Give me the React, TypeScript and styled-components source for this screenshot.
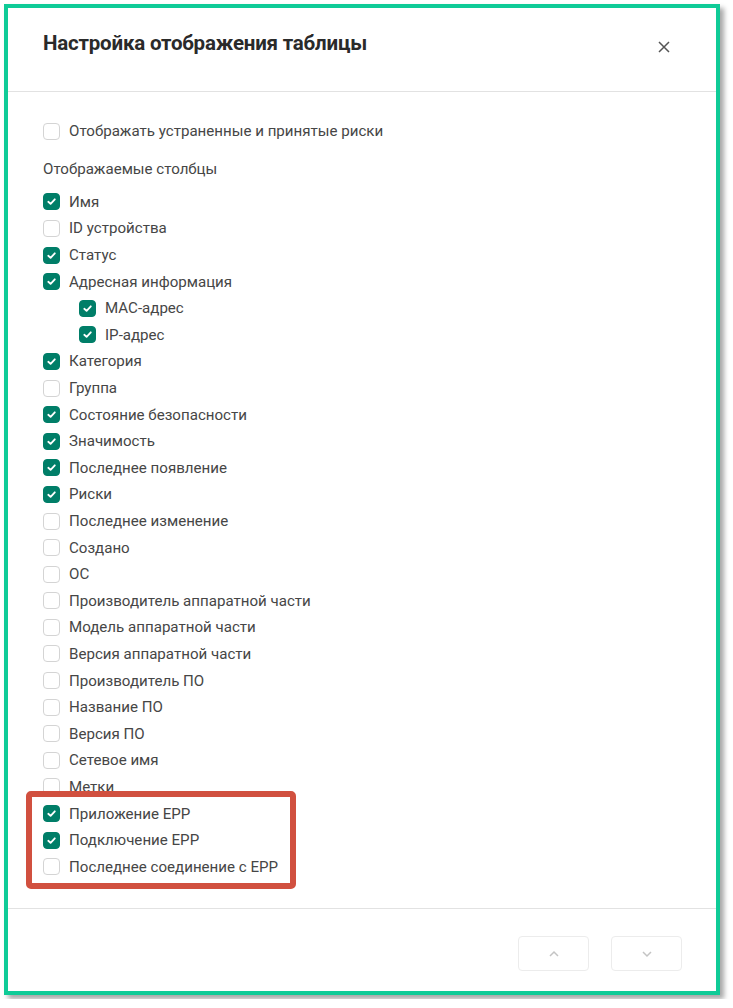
import styled, { createGlobalStyle } from 'styled-components';

let Global = createGlobalStyle`
  html, body {
    margin: 0;
    padding: 0;
    background: #ffffff;
  }
  body {
    font-family: Roboto, 'Noto Sans', sans-serif;
  }
`;

let Frame = styled.div`
  margin: 4px;
  width: 716px;
  height: 991px;
  box-sizing: border-box;
  border: 4px solid #0fcb97;
  box-shadow: 4px 4px 5px rgba(0, 0, 0, 0.35);
  background: #fff;
  display: flex;
  flex-direction: column;
  position: relative;
`;

let Header = styled.header`
  height: 83px;
  flex: none;
  display: flex;
  align-items: center;
  justify-content: space-between;
  padding: 0 44px 0 35px;
  border-bottom: 1px solid #e2e2e2;
`;

let Title = styled.h1`
  margin: 0 0 14px;
  font-size: 20.5px;
  font-weight: 700;
  color: #2a2a2a;
  letter-spacing: -0.2px;
`;

let Close = styled.button`
  border: none;
  background: none;
  padding: 0;
  width: 16px;
  height: 16px;
  display: flex;
  margin-bottom: 6px;
  color: #555;
`;

let Body = styled.main`
  flex: 1;
  padding: 26px 35px 0;
  position: relative;
`;

let Row = styled.label<{ $indent?: boolean }>`
  display: flex;
  align-items: center;
  gap: 9px;
  height: 26.6px;
  padding-left: ${(p) => (p.$indent ? '36px' : '0')};
  font-size: 15.1px;
  color: #464646;
`;

let Box = styled.span<{ $on: boolean }>`
  width: 17px;
  height: 17px;
  box-sizing: border-box;
  border-radius: 4px;
  flex: none;
  display: flex;
  align-items: center;
  justify-content: center;
  background: ${(p) => (p.$on ? '#007e68' : '#fff')};
  border: 1px solid ${(p) => (p.$on ? '#007e68' : '#d4d4d4')};
`;

let Section = styled.div`
  font-size: 15.1px;
  color: #464646;
  margin: 14px 0 10px;
  height: 20px;
  line-height: 20px;
`;

let Highlight = styled.div`
  position: absolute;
  left: 18px;
  top: 699px;
  width: 270px;
  height: 98px;
  box-sizing: border-box;
  border: 6px solid #d1503f;
  border-radius: 5px;
  pointer-events: none;
`;

let Footer = styled.footer`
  height: 83px;
  flex: none;
  border-top: 1px solid #e2e2e2;
  display: flex;
  justify-content: flex-end;
  align-items: flex-start;
  gap: 22px;
  padding: 27px 34px 0 0;
  box-sizing: border-box;
`;

let NavButton = styled.button`
  width: 71px;
  height: 35px;
  border: 1px solid #ececec;
  border-radius: 4px;
  background: #fff;
  display: flex;
  align-items: center;
  justify-content: center;
  color: #c4c4c4;
  padding: 0;
`;

let Check = () => (
  <svg width="11" height="11" viewBox="0 0 12 12">
    <path d="M2.5 6.3 L5 8.6 L9.6 3.6" fill="none" stroke="#fff" strokeWidth="2" strokeLinecap="round" strokeLinejoin="round" />
  </svg>
);

let Item = ({ on, text, indent }: { on: boolean; text: string; indent?: boolean }) => (
  <Row $indent={indent}>
    <Box $on={on}>{on && <Check />}</Box>
    {text}
  </Row>
);

let columns: [string, boolean, boolean?][] = [
  ['Имя', true],
  ['ID устройства', false],
  ['Статус', true],
  ['Адресная информация', true],
  ['MAC-адрес', true, true],
  ['IP-адрес', true, true],
  ['Категория', true],
  ['Группа', false],
  ['Состояние безопасности', true],
  ['Значимость', true],
  ['Последнее появление', true],
  ['Риски', true],
  ['Последнее изменение', false],
  ['Создано', false],
  ['ОС', false],
  ['Производитель аппаратной части', false],
  ['Модель аппаратной части', false],
  ['Версия аппаратной части', false],
  ['Производитель ПО', false],
  ['Название ПО', false],
  ['Версия ПО', false],
  ['Сетевое имя', false],
  ['Метки', false],
  ['Приложение EPP', true],
  ['Подключение EPP', true],
  ['Последнее соединение с EPP', false]
];

export default function App() {
  return (
    <>
      <Global />
      <Frame>
        <Header>
          <Title>Настройка отображения таблицы</Title>
          <Close aria-label="Close">
            <svg width="16" height="16" viewBox="0 0 16 16">
              <path d="M3 3 L13 13 M13 3 L3 13" stroke="currentColor" strokeWidth="1.5" />
            </svg>
          </Close>
        </Header>
        <Body>
          <Item on={false} text="Отображать устраненные и принятые риски" />
          <Section>Отображаемые столбцы</Section>
          {columns.map(([text, on, indent]) => (
            <Item key={text} text={text} on={on} indent={indent} />
          ))}
          <Highlight />
        </Body>
        <Footer>
          <NavButton aria-label="Up">
            <svg width="14" height="14" viewBox="0 0 14 14">
              <path d="M3 9 L7 5 L11 9" fill="none" stroke="currentColor" strokeWidth="1.5" />
            </svg>
          </NavButton>
          <NavButton aria-label="Down">
            <svg width="14" height="14" viewBox="0 0 14 14">
              <path d="M3 5 L7 9 L11 5" fill="none" stroke="currentColor" strokeWidth="1.5" />
            </svg>
          </NavButton>
        </Footer>
      </Frame>
    </>
  );
}
